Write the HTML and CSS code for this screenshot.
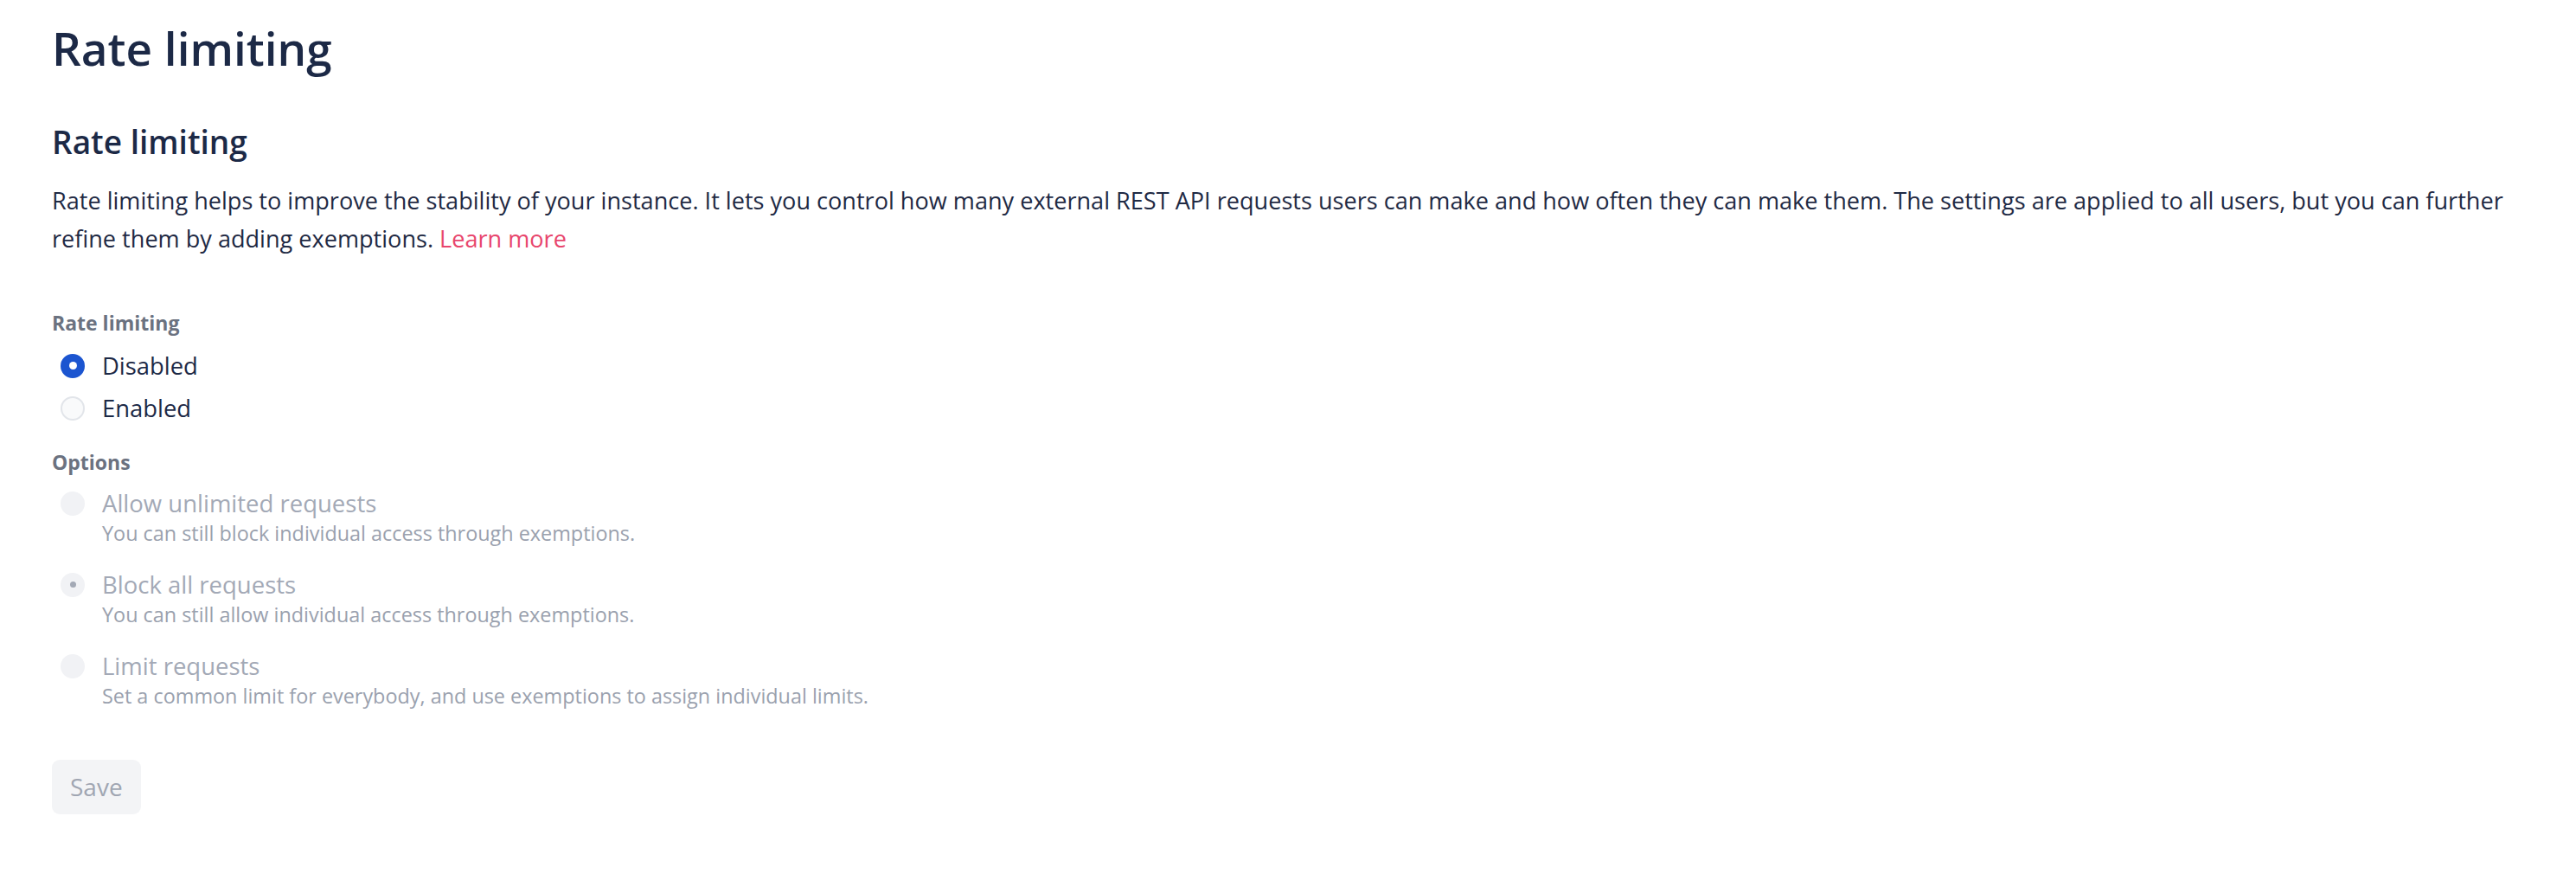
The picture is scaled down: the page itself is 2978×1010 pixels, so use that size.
FILE: index.html
```html
<!DOCTYPE html>
<html lang="en">
<head>
<meta charset="utf-8">
<title>Rate limiting</title>
<link rel="stylesheet" href="styles.css">
</head>
<body>
<main class="page">
  <h1 class="page-title">Rate limiting</h1>
  <section class="section">
    <h2 class="section-title">Rate limiting</h2>
    <p class="section-desc">Rate limiting helps to improve the stability of your instance. It lets you control how many external REST API requests users can make and how often they can make them. The settings are applied to all users, but you can further refine them by adding exemptions. <a class="link" href="#">Learn more</a></p>

    <form class="form">
      <fieldset class="group">
        <legend class="group-label">Rate limiting</legend>
        <label class="choice">
          <span class="radio radio-checked"></span>
          <span class="choice-title">Disabled</span>
        </label>
        <label class="choice">
          <span class="radio"></span>
          <span class="choice-title">Enabled</span>
        </label>
      </fieldset>

      <fieldset class="group options">
        <legend class="group-label">Options</legend>
        <div class="option">
          <span class="radio radio-disabled"></span>
          <div class="option-text">
            <span class="option-title">Allow unlimited requests</span>
            <span class="option-help">You can still block individual access through exemptions.</span>
          </div>
        </div>
        <div class="option">
          <span class="radio radio-disabled radio-disabled-checked"></span>
          <div class="option-text">
            <span class="option-title">Block all requests</span>
            <span class="option-help">You can still allow individual access through exemptions.</span>
          </div>
        </div>
        <div class="option">
          <span class="radio radio-disabled"></span>
          <div class="option-text">
            <span class="option-title">Limit requests</span>
            <span class="option-help">Set a common limit for everybody, and use exemptions to assign individual limits.</span>
          </div>
        </div>
      </fieldset>

      <button type="button" class="btn-save" disabled>Save</button>
    </form>
  </section>
</main>
</body>
</html>
```
FILE: styles.css
```css
* { box-sizing: border-box; }

html, body {
  margin: 0;
  padding: 0;
  background: #ffffff;
}

body {
  font-family: "Open Sans", "Noto Sans", sans-serif;
  color: #1f2a44;
}

.page {
  padding: 24px 40px 40px 60px;
}

.page-title {
  margin: 0;
  font-size: 53px;
  line-height: 64.8px;
  font-weight: 600;
  color: #1c2946;
}

.section {
  margin-top: 50px;
}

.section-title {
  margin: 0;
  font-size: 37px;
  line-height: 50.4px;
  font-weight: 600;
  color: #1c2946;
}

.section-desc {
  margin: 21px 0 0 0;
  max-width: 2872px;
  font-size: 27.1px;
  line-height: 43.5px;
  color: #1f2a44;
}

.link {
  color: #e8466d;
  text-decoration: none;
}

.form {
  margin-top: 58px;
  display: flex;
  flex-direction: column;
  align-items: flex-start;
}

.group {
  border: 0;
  margin: 0;
  padding: 0;
  min-width: 0;
  display: flex;
  flex-direction: column;
}

.group-label {
  padding: 0;
  font-size: 23px;
  line-height: 36px;
  font-weight: 700;
  color: #6b7280;
  margin-bottom: 10px;
  float: left;
  width: 100%;
}

.choice {
  display: flex;
  align-items: center;
  gap: 20px;
  padding-left: 10px;
  font-size: 27.4px;
  line-height: 43.2px;
  color: #1c2946;
}

.choice + .choice {
  margin-top: 6px;
}

.radio {
  flex: none;
  width: 28px;
  height: 28px;
  border-radius: 50%;
  border: 2px solid #e2e5ea;
  background: #f9fafb;
  display: flex;
  align-items: center;
  justify-content: center;
}

.radio-checked {
  border-color: #1c55d0;
  background: #1c55d0;
}

.radio-checked::after {
  content: "";
  width: 9px;
  height: 9px;
  border-radius: 50%;
  background: #ffffff;
}

.radio-disabled {
  border-color: #f1f2f5;
  background: #f1f2f5;
}

.radio-disabled-checked::after {
  content: "";
  width: 7px;
  height: 7px;
  border-radius: 50%;
  background: #a3a9b5;
}

.options {
  margin-top: 22px;
}

.options .group-label {
  margin-bottom: 12px;
}

.option {
  display: flex;
  align-items: flex-start;
  gap: 20px;
  padding-left: 10px;
}

.option + .option {
  margin-top: 26px;
}

.option .radio {
  margin-top: 4px;
}

.option-text {
  display: flex;
  flex-direction: column;
}

.option-title {
  font-size: 27.5px;
  line-height: 36px;
  color: #a3a9b6;
}

.option-help {
  font-size: 23.4px;
  line-height: 32px;
  color: #9aa1ae;
}

.btn-save {
  margin-top: 58px;
  height: 63px;
  padding: 0 21px;
  border: 0;
  border-radius: 9px;
  background: #f3f4f6;
  color: #a0a6b2;
  font-family: "Open Sans", "Noto Sans", sans-serif;
  font-size: 28px;
  line-height: 36px;
}
```
